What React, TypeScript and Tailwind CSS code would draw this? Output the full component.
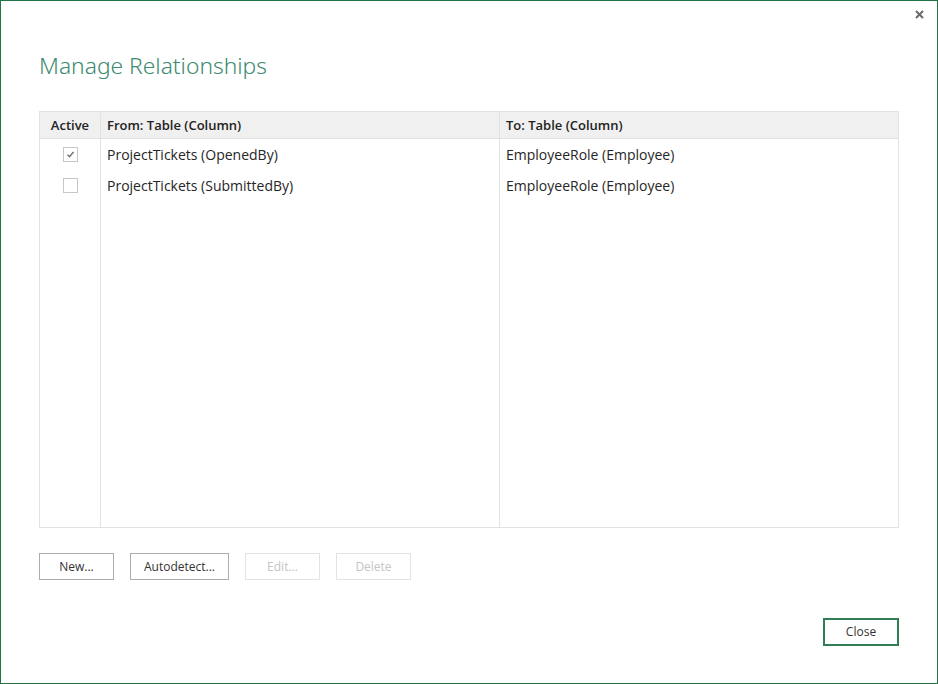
import React from "react";

const font = { fontFamily: '"Open Sans", "Noto Sans", Arial, sans-serif' };

function Check({ checked }: { checked: boolean }) {
  return (
    <div className="w-[15px] h-[15px] border border-[#c6c6c6] bg-white flex items-center justify-center">
      {checked && (
        <svg width="11" height="11" viewBox="0 0 11 11">
          <path d="M2.5 5.8 L4.5 7.8 L8.5 3" fill="none" stroke="#6d6d6d" strokeWidth="1.4" />
        </svg>
      )}
    </div>
  );
}

function Btn({ label, w, disabled }: { label: string; w: string; disabled?: boolean }) {
  return (
    <div
      className={`${w} h-[27px] flex items-center justify-center text-[12px] border ${
        disabled ? "border-[#e3e3e3] text-[#c4c4c4]" : "border-[#acacac] text-[#333]"
      }`}
    >
      {label}
    </div>
  );
}

const rows = [
  { active: true, from: "ProjectTickets (OpenedBy)", to: "EmployeeRole (Employee)" },
  { active: false, from: "ProjectTickets (SubmittedBy)", to: "EmployeeRole (Employee)" },
];

export default function App() {
  return (
    <div
      className="w-[938px] h-[684px] bg-white border border-[#217346] flex flex-col text-[#262626]"
      style={font}
    >
      <div className="flex justify-end pt-[9px] pr-[13px] h-[28px]">
        <svg width="9" height="9" viewBox="0 0 9 9">
          <path d="M1 1 L8 8 M8 1 L1 8" stroke="#6b6b6b" strokeWidth="2" />
        </svg>
      </div>
      <div
        className="pl-[38px] pt-[23px] text-[22.8px] leading-[28px] font-light text-[#3d8b70]"
        style={{ fontFamily: '"Noto Sans", "Open Sans", sans-serif', fontWeight: 300 }}
      >
        Manage Relationships
      </div>
      <div className="mx-[38px] mt-[31px] h-[417px] border border-[#e2e2e2] flex flex-col">
        <div className="flex h-[27px] bg-[#f0f0f0] border-b border-[#e2e2e2] text-[13px] font-semibold text-[#222] pt-[1px]">
          <div className="w-[61px] flex items-center justify-center border-r border-[#e2e2e2]">Active</div>
          <div className="w-[399px] flex items-center pl-[6px] border-r border-[#e2e2e2]">From: Table (Column)</div>
          <div className="flex-1 flex items-center pl-[6px]">To: Table (Column)</div>
        </div>
        <div className="flex flex-1 text-[14px]">
          <div className="w-[61px] border-r border-[#e2e2e2]">
            {rows.map((r, i) => (
              <div key={i} className="h-[31px] flex items-center justify-center">
                <Check checked={r.active} />
              </div>
            ))}
          </div>
          <div className="w-[399px] border-r border-[#e2e2e2]">
            {rows.map((r, i) => (
              <div key={i} className="h-[31px] flex items-center pl-[6px]">
                {r.from}
              </div>
            ))}
          </div>
          <div className="flex-1">
            {rows.map((r, i) => (
              <div key={i} className="h-[31px] flex items-center pl-[6px]">
                {r.to}
              </div>
            ))}
          </div>
        </div>
      </div>
      <div className="flex gap-[16px] pl-[38px] mt-[25px]">
        <Btn label="New..." w="w-[75px]" />
        <Btn label="Autodetect..." w="w-[99px]" />
        <Btn label="Edit..." w="w-[75px]" disabled />
        <Btn label="Delete" w="w-[75px]" disabled />
      </div>
      <div className="flex justify-end pr-[38px] mt-[38px]">
        <div className="w-[76px] h-[28px] border-2 border-[#2e7d57] flex items-center justify-center text-[12px] text-[#333]">
          Close
        </div>
      </div>
    </div>
  );
}
